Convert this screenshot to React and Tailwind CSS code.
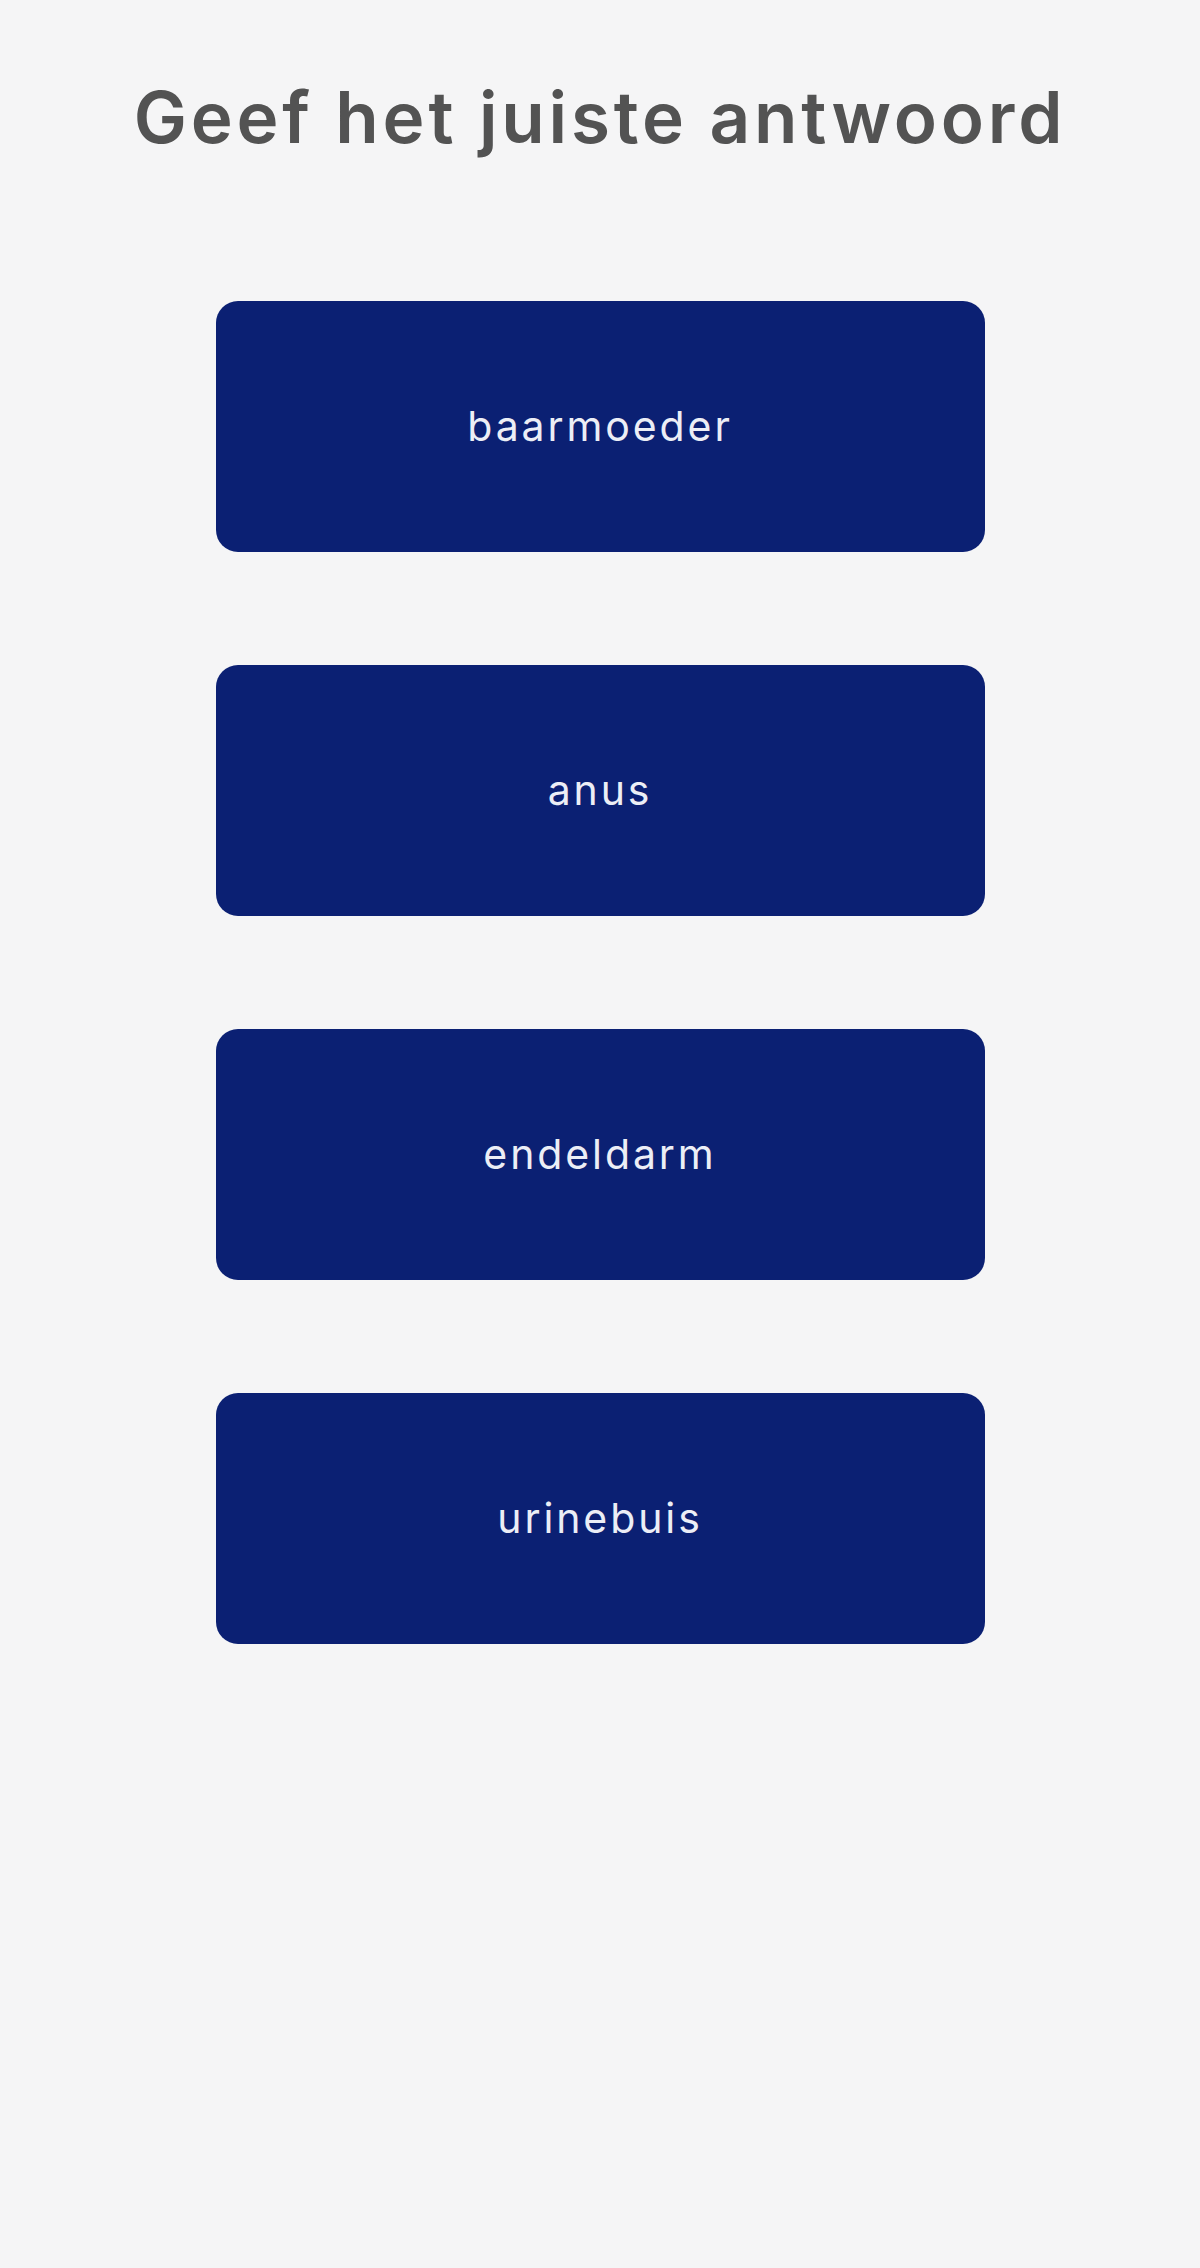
import React from "react";

const answers = ["baarmoeder", "anus", "endeldarm", "urinebuis"];

export default function App() {
  return (
    <div className="min-h-[2268px] w-full bg-[#f5f5f6] flex flex-col items-center" style={{ fontFamily: "Inter, 'Open Sans', sans-serif" }}>
      <h1 className="mt-[82px] text-[71px] leading-none font-semibold text-[#535353] tracking-[3.8px]">
        Geef het juiste antwoord
      </h1>
      <div className="mt-[148px] flex flex-col gap-[113px] w-[769px]">
        {answers.map((a) => (
          <button
            key={a}
            className="h-[251px] w-full rounded-[22px] bg-[#0b2073] text-[#eceef6] text-[41px] tracking-[2.9px] flex items-center justify-center"
            style={{ fontFamily: "Inter, 'Open Sans', sans-serif" }}
          >
            {a}
          </button>
        ))}
      </div>
    </div>
  );
}
